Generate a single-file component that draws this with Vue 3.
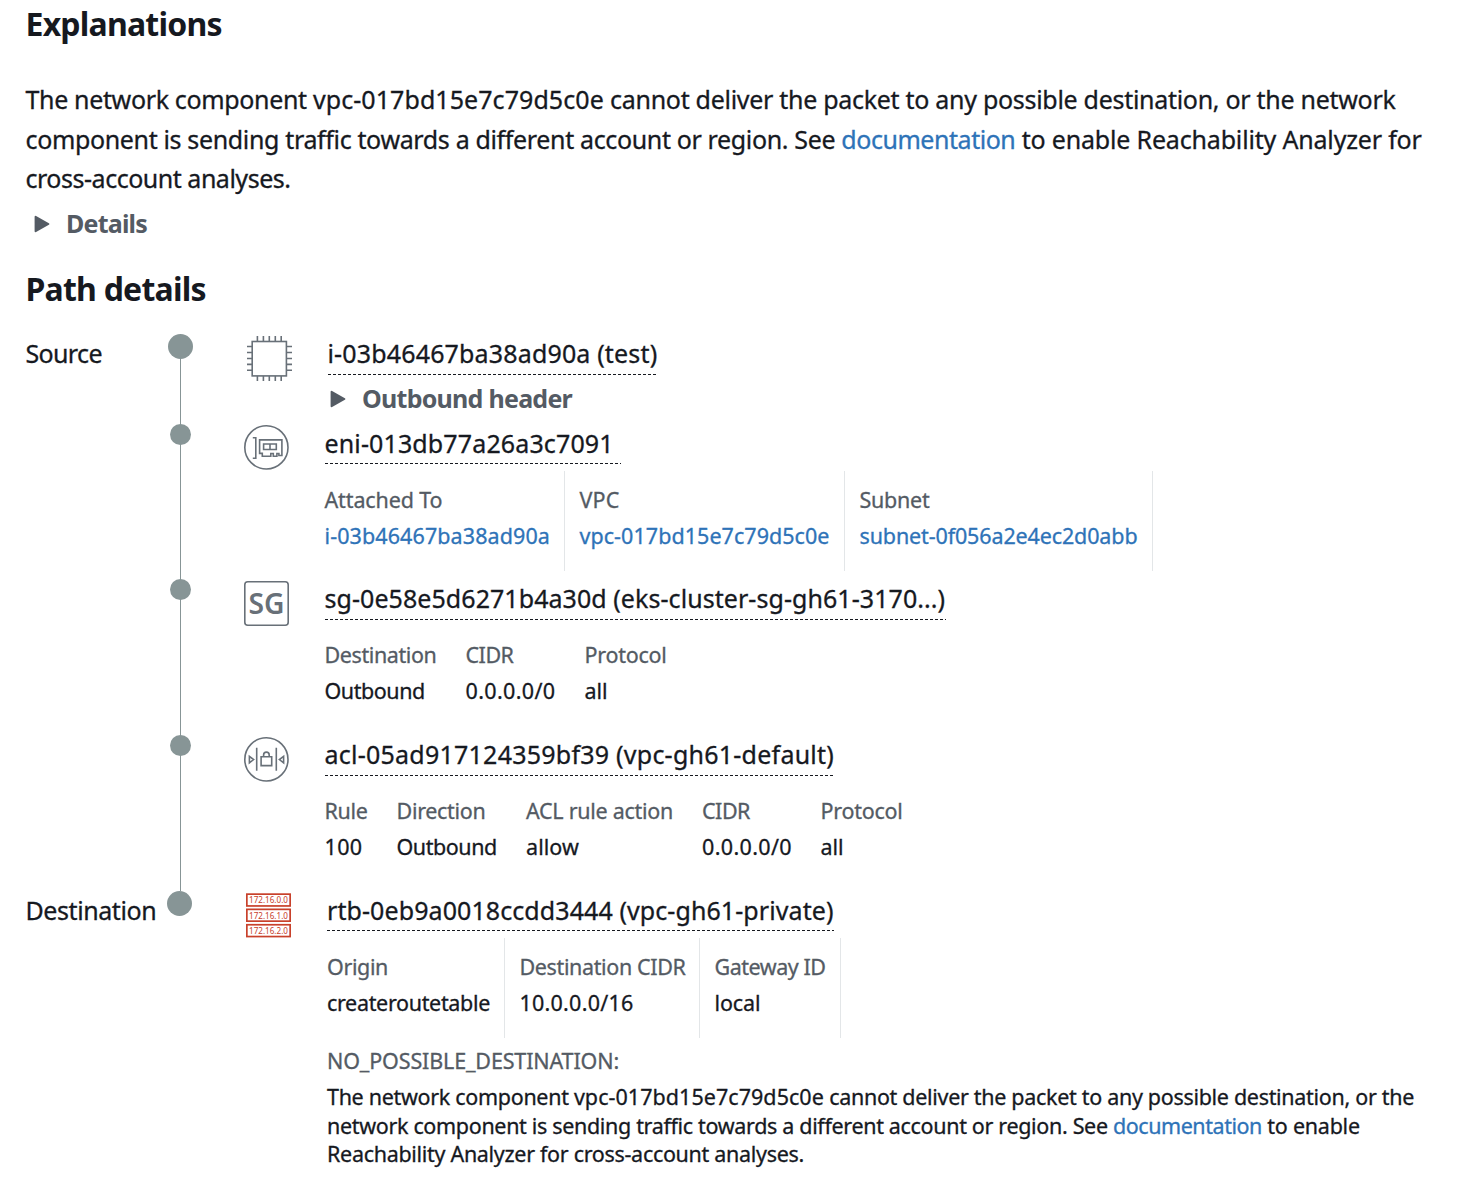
<script setup>
// `ls` is the tracking of a text run in pixels
const track = (ls) => ({ letterSpacing: `${ls}px` })

const summary = [
  [
    { text: 'The network component ', ls: -0.345 },
    { text: 'vpc-017bd15e7c79d5c0e', ls: 0.07 },
    { text: ' cannot deliver the packet to any possible destination, or the network', ls: -0.29 },
  ],
  [
    { text: 'component is sending traffic towards a different account or region. See ', ls: -0.352 },
    { text: 'documentation', ls: -0.46, link: true },
    { text: ' to enable Reachability Analyzer for', ls: -0.175 },
  ],
  [{ text: 'cross-account analyses.', ls: -0.478 }],
]

const failure = [
  [
    { text: 'The network component ', ls: -0.31 },
    { text: 'vpc-017bd15e7c79d5c0e', ls: 0.05 },
    { text: ' cannot deliver the packet to any possible destination, or the', ls: -0.308 },
  ],
  [
    { text: 'network component is sending traffic towards a different account or region. See ', ls: -0.331 },
    { text: 'documentation', ls: -0.445, link: true },
    { text: ' to enable', ls: -0.25 },
  ],
  [{ text: 'Reachability Analyzer for cross-account analyses.', ls: -0.305 }],
]

const hops = [
  { id: 'source', icon: 'instance', label: 'Source', labelLs: -0.65, title: 'i-03b46467ba38ad90a (test)', ls: 0.16, header: true, attrs: [] },
  {
    id: 'eni', icon: 'eni', title: 'eni-013db77a26a3c7091', ls: 0.13, ruled: true,
    attrs: [
      { name: 'Attached To', nameLs: -0.121, value: 'i-03b46467ba38ad90a', ls: 0.1, link: true, width: 240 },
      { name: 'VPC', nameLs: 0.167, value: 'vpc-017bd15e7c79d5c0e', ls: 0.051, link: true, width: 280 },
      { name: 'Subnet', nameLs: -0.25, value: 'subnet-0f056a2e4ec2d0abb', ls: -0.128, link: true, width: 308 },
    ],
  },
  {
    id: 'sg', icon: 'sg', title: 'sg-0e58e5d6271b4a30d (eks-cluster-sg-gh61-3170...)', ls: 0.06,
    attrs: [
      { name: 'Destination', nameLs: -0.399, value: 'Outbound', ls: -0.45, width: 126 },
      { name: 'CIDR', nameLs: -0.488, value: '0.0.0.0/0', ls: 0.358, width: 119 },
      { name: 'Protocol', nameLs: -0.264, value: 'all', ls: -0.052, width: 112 },
    ],
  },
  {
    id: 'acl', icon: 'acl', title: 'acl-05ad917124359bf39 (vpc-gh61-default)', ls: 0.24,
    attrs: [
      { name: 'Rule', nameLs: -0.336, value: '100', ls: 0.365, width: 57 },
      { name: 'Direction', nameLs: -0.306, value: 'Outbound', ls: -0.45, width: 129.5 },
      { name: 'ACL rule action', nameLs: -0.278, value: 'allow', ls: 0.072, width: 176 },
      { name: 'CIDR', nameLs: -0.488, value: '0.0.0.0/0', ls: 0.358, width: 118.5 },
      { name: 'Protocol', nameLs: -0.264, value: 'all', ls: -0.052, width: 112 },
    ],
  },
  {
    id: 'destination', icon: 'rtb', label: 'Destination', labelLs: -0.42, title: 'rtb-0eb9a0018ccdd3444 (vpc-gh61-private)', ls: 0.085, ruled: true,
    attrs: [
      { name: 'Origin', nameLs: -0.38, value: 'createroutetable', ls: -0.325, width: 177.5 },
      { name: 'Destination CIDR', nameLs: -0.37, value: '10.0.0.0/16', ls: 0.239, width: 195 },
      { name: 'Gateway ID', nameLs: -0.467, value: 'local', ls: -0.097, width: 141 },
    ],
    failed: true,
  },
]

const routes = [
  { y: 0.3, ip: '172.16.0.0' },
  { y: 15.5, ip: '172.16.1.0' },
  { y: 30.9, ip: '172.16.2.0' },
]
</script>

<template>
  <main class="page">
    <h2 class="heading">Explanations</h2>
    <p class="summary">
      <span v-for="(line, i) in summary" :key="i" class="line"><component :is="run.link ? 'a' : 'span'" v-for="(run, j) in line" :key="j" :style="track(run.ls)">{{ run.text }}</component></span>
    </p>
    <div class="expander">
      <svg class="caret" viewBox="0 0 16 18"><path d="M1.6 1.8v14.4L14.4 9z" /></svg>
      <span class="expander-details">Details</span>
    </div>
    <h2 class="heading path-heading">Path details</h2>

    <div class="path">
      <section v-for="hop in hops" :key="hop.id" class="hop" :class="hop.id">
        <div class="label"><span v-if="hop.label" :style="track(hop.labelLs)">{{ hop.label }}</span></div>
        <div class="rail"><span class="dot"></span></div>
        <div class="icon">
          <svg v-if="hop.icon === 'instance'" width="46" height="46" viewBox="0 0 46 46" class="line-icon">
            <rect x="6.2" y="5.5" width="34.2" height="34.4" />
            <path d="M11.4 0v5M17.4 0v5M23.3 0v5M29.3 0v5M35.2 0v5M11.4 40v5M17.4 40v5M23.3 40v5M29.3 40v5M35.2 40v5M1 10.5h5M1 16.5h5M1 22.5h5M1 28.4h5M1 34.3h5M41 10.5h5M41 16.5h5M41 22.5h5M41 28.4h5M41 34.3h5" />
          </svg>
          <svg v-else-if="hop.icon === 'eni'" width="45" height="45" viewBox="0 0 45 45" class="line-icon">
            <circle cx="22.4" cy="22.4" r="21.6" />
            <path d="M8.8 12.7h3v20.6h-3M15.6 14.9h22.3v15.6h-3v-2h-2v2.7h-3.6v-2.7h-2.5v2.7h-8.5v-2.8h-2.7z" />
            <path d="M19.6 19h12.7v5.5H19.6zM26 19v5.5" />
          </svg>
          <svg v-else-if="hop.icon === 'sg'" width="45" height="45" viewBox="0 0 45 45" class="line-icon">
            <rect x=".8" y=".8" width="43.4" height="43.4" rx="3" />
            <text class="sg-text" x="4.5" y="33" textLength="36" lengthAdjust="spacingAndGlyphs">SG</text>
          </svg>
          <svg v-else-if="hop.icon === 'acl'" width="45" height="45" viewBox="0 0 45 45" class="line-icon">
            <circle cx="22.4" cy="22.4" r="21.6" />
            <path d="M12.7 10.8v23M32.3 10.8v23M5.4 19.4v6.4l4.2-3.2zM39.6 19.4v6.4l-4.2-3.2zM17.1 19.8h10.6v8.8H17.1zM19.6 19.8v-1.9a2.8 2.8 0 0 1 5.6 0v1.9" />
          </svg>
          <svg v-else width="46" height="45" viewBox="0 0 46 45" class="route-icon">
            <g v-for="route in routes" :key="route.ip">
              <rect x=".85" :y="route.y + 0.85" width="43.3" height="11.8" />
              <text x="3" :y="route.y + 10.1" textLength="39" lengthAdjust="spacingAndGlyphs">{{ route.ip }}</text>
            </g>
          </svg>
        </div>
        <div class="body">
          <div class="title" :style="track(hop.ls)">{{ hop.title }}</div>
          <div v-if="hop.header" class="expander outbound">
            <svg class="caret" viewBox="0 0 16 18"><path d="M1.6 1.8v14.4L14.4 9z" /></svg>
            <span class="expander-outbound">Outbound header</span>
          </div>
          <div v-if="hop.attrs.length" class="attrs" :class="{ ruled: hop.ruled }">
            <dl v-for="attr in hop.attrs" :key="attr.name" :style="{ width: `${attr.width}px` }">
              <dt :style="track(attr.nameLs)">{{ attr.name }}</dt>
              <dd><component :is="attr.link ? 'a' : 'span'" :style="track(attr.ls)">{{ attr.value }}</component></dd>
            </dl>
          </div>
          <template v-if="hop.failed">
            <div class="code">NO_POSSIBLE_DESTINATION:</div>
            <p class="failure">
              <span v-for="(line, i) in failure" :key="i" class="line"><component :is="run.link ? 'a' : 'span'" v-for="(run, j) in line" :key="j" :style="track(run.ls)">{{ run.text }}</component></span>
            </p>
          </template>
        </div>
      </section>
    </div>
  </main>
</template>

<style>
body {
  margin: 0;
  background: #fff;
}
</style>

<style scoped>
.page {
  box-sizing: border-box;
  width: 1458px;
  height: 1192px;
  overflow: hidden;
  padding: 3px 0 0 25.5px;
  color: #16191f;
  font: 400 25px/39.5px "Noto Sans", sans-serif;
  -webkit-text-stroke: 0.3px currentColor;
}
.heading {
  margin: 0;
  font-size: 32px;
  line-height: 41px;
  font-weight: 700;
  letter-spacing: -0.78px;
  -webkit-text-stroke: 0;
}
.summary {
  margin: 36px 0 0;
}
.line {
  display: block;
  white-space: pre;
}
a {
  color: #2e73b8;
}
.expander {
  display: flex;
  align-items: center;
  color: #545b64;
  font-weight: 700;
  line-height: 46px;
  padding-left: 8px;
  margin-top: 1.5px;
  -webkit-text-stroke: 0;
}
.caret {
  width: 16px;
  height: 18px;
  margin-right: 16.5px;
  fill: currentColor;
  stroke: currentColor;
  stroke-width: 2;
  stroke-linejoin: round;
  margin-top: 1px;
}
.expander-details {
  letter-spacing: -0.79px;
}
.expander-outbound {
  letter-spacing: -0.74px;
}
.outbound {
  margin: 0;
  padding-left: 2px;
}
.path-heading {
  margin-top: 22px;
}
.path {
  margin-top: 25px;
}
.hop {
  display: flex;
  box-sizing: border-box;
  height: 156px;
}
.source {
  height: 90px;
}
.eni {
  height: 155px;
}
.destination {
  height: 300px;
}
.label {
  width: 142.5px;
  line-height: 39px;
}
.rail {
  display: flex;
  justify-content: center;
  width: 25px;
  background: linear-gradient(#879596, #879596) 12px 0 / 1px 100% no-repeat;
}
.dot {
  width: 21px;
  height: 21px;
  border-radius: 50%;
  background: #879596;
}
.source .dot,
.destination .dot {
  width: 25px;
  height: 25px;
}
.destination .rail {
  background: none;
  margin: 0 1px 0 -1px;
}
.icon {
  box-sizing: border-box;
  width: 131.5px;
  padding-left: 51px;
  margin-top: 2px;
}
.eni .icon {
  margin-top: 1px;
}
.source .icon,
.destination .icon {
  width: 134.5px;
  padding-left: 53px;
}
.destination .icon {
  width: 134px;
}
.icon svg {
  display: block;
  -webkit-text-stroke: 0;
}
.line-icon {
  fill: none;
  stroke: #687078;
  stroke-width: 1.6;
}
.sg-text {
  fill: #687078;
  stroke: none;
  font-size: 28.5px;
  font-weight: 600;
}
.route-icon {
  fill: none;
  stroke: #c8412b;
  stroke-width: 1.7;
}
.route-icon text {
  fill: #c8412b;
  stroke: none;
  font-size: 9px;
}
.title {
  width: fit-content;
  box-sizing: border-box;
  height: 41px;
  padding-right: 0.5px;
  line-height: 39px;
  white-space: nowrap;
  background: repeating-linear-gradient(90deg, #16191f 0 3px, transparent 3px 5px) 0 100% / 100% 1px no-repeat;
}
.eni .title {
  height: 40px;
  padding-right: 7px;
}
.destination .title {
  height: 40px;
}
.attrs {
  display: flex;
  margin-top: 7px;
  font-size: 21.5px;
  line-height: 36px;
  white-space: nowrap;
}
.sg .attrs,
.acl .attrs {
  margin-top: 6px;
}
.attrs dl {
  box-sizing: border-box;
  margin: 0;
  padding: 11px 0 17px;
  border-right: 1px solid transparent;
}
.attrs dl + dl {
  padding-left: 15px;
}
.ruled dl {
  border-right-color: #e3e6e8;
}
dt {
  color: #545b64;
}
dd {
  margin: 0;
}
.code {
  margin-top: 5px;
  color: #545b64;
  font-size: 21.5px;
  line-height: 36px;
  letter-spacing: -0.147px;
}
.failure {
  margin: 4px 0 0;
  font-size: 21.5px;
  line-height: 28.5px;
}
</style>
